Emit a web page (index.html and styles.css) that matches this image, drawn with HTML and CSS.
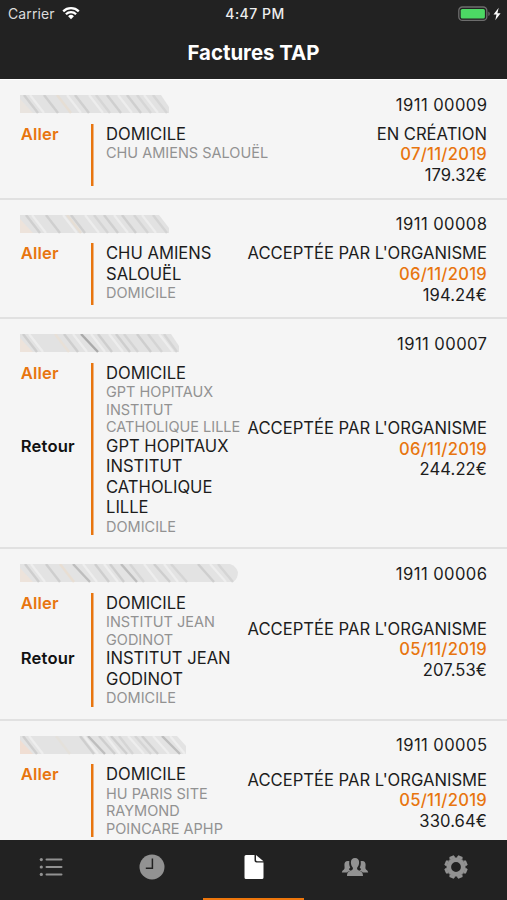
FILE: index.html
```
<!DOCTYPE html>
<html lang="fr">
<head>
	<meta charset="utf-8">
	<title>Factures TAP</title>
	<link rel="stylesheet" href="styles.css">
</head>
<body>
	<header class="header">
		<div class="status">
			<div class="status-left">
				<span class="carrier">Carrier</span>
				<svg class="wifi" width="18" height="14" viewBox="0 0 18 14" fill="none" stroke="#fff" stroke-width="2.3">
					<path d="M1.2 5.3a11.2 11.2 0 0 1 15.6 0"/>
					<path d="M3.9 8.3a7.3 7.3 0 0 1 10.2 0"/>
					<path d="M9 13.2L6.1 10.2a4.2 4.2 0 0 1 5.8 0z" fill="#fff" stroke="none"/>
				</svg>
			</div>
			<span class="time">4:47 PM</span>
			<div class="status-right">
				<svg width="44" height="16" viewBox="0 0 44 16">
					<rect x=".8" y="1" width="28" height="13.4" rx="3.6" fill="none" stroke="#6d6d6d" stroke-width="1.3"/>
					<rect x="2.7" y="3" width="24.2" height="9.5" rx="1.6" fill="#4cd964"/>
					<path d="M30.3 5.4c2 .9 2 3.7 0 4.6z" fill="#6d6d6d"/>
					<path d="M40.7 1.8L35.5 8.6h3l-1.2 5.6 5.3-7h-3.2z" fill="#fff"/>
				</svg>
			</div>
		</div>
		<h1 class="title">Factures TAP</h1>
	</header>

	<main class="list">
		<section class="item">
			<div class="item-head">
				<svg class="name" width="149" height="19" viewBox="0 0 149 19">
					<path d="M0 0H141L149 12V18H0z" fill="#e2e2e2"/>
					<path d="M0 4L13 18H0z" fill="#e9e4df"/>
					<g class="hatch">
						<path d="M4 0l14 18M24 0l14 18M55 0l14 18M87 0l14 18M107 0l14 18" stroke="#c6c6c6"/>
						<path d="M10 0l14 18M47 0l14 18M69 0l14 18M98 0l14 18M124 0l14 18" stroke="#f3f3f3"/>
						<path d="M37 0l14 18" stroke="#e9dccd"/>
						<path d="M76 0l14 18M117 0l14 18M133 0l14 18" stroke="#d0d0d0"/>
					</g>
				</svg>
				<span class="number">1911 00009</span>
			</div>
			<div class="item-body">
				<div class="trips">
					<div class="trip"><span class="way">Aller</span><div class="route"><p class="from">DOMICILE</p><p class="to">CHU AMIENS SALOUËL</p></div></div>
				</div>
				<div class="info"><p>EN CRÉATION</p><p class="date">07/11/2019</p><p class="amount">179.32€</p></div>
			</div>
		</section>

		<section class="item">
			<div class="item-head">
				<svg class="name" width="149" height="19" viewBox="0 0 149 19">
					<path d="M0 0H139L149 13V18H0z" fill="#e2e2e2"/>
					<path d="M0 4L13 18H0z" fill="#ede3db"/>
					<g class="hatch">
						<path d="M6 0l14 18M26 0l14 18M51 0l14 18M84 0l14 18M102 0l14 18" stroke="#c6c6c6"/>
						<path d="M12 0l14 18M43 0l14 18M65 0l14 18M94 0l14 18M122 0l14 18" stroke="#f3f3f3"/>
						<path d="M47 0l14 18" stroke="#e9dccd"/>
						<path d="M74 0l14 18M114 0l14 18M133 0l14 18" stroke="#cecece"/>
					</g>
				</svg>
				<span class="number">1911 00008</span>
			</div>
			<div class="item-body">
				<div class="trips">
					<div class="trip"><span class="way">Aller</span><div class="route"><p class="from">CHU AMIENS SALOUËL</p><p class="to">DOMICILE</p></div></div>
				</div>
				<div class="info"><p>ACCEPTÉE PAR L'ORGANISME</p><p class="date">06/11/2019</p><p class="amount">194.24€</p></div>
			</div>
		</section>

		<section class="item">
			<div class="item-head">
				<svg class="name" width="159" height="19" viewBox="0 0 159 19">
					<path d="M0 0H151L159 12V18H0z" fill="#e2e2e2"/>
					<path d="M0 4L13 18H0z" fill="#ede3db"/>
					<g class="hatch">
						<path d="M61 0l17 18" stroke="#8d8d8d"/>
						<path d="M3 0l14 18M44 0l14 18M78 0l14 18M96 0l14 18M117 0l14 18" stroke="#c4c4c4"/>
						<path d="M9 0l14 18M53 0l14 18M71 0l14 18M89 0l14 18M139 0l14 18" stroke="#f4f4f4"/>
						<path d="M35 0l14 18" stroke="#ecdfd2"/>
						<path d="M104 0l14 18M128 0l14 18M144 0l13 18" stroke="#cecece"/>
					</g>
				</svg>
				<span class="number">1911 00007</span>
			</div>
			<div class="item-body">
				<div class="trips">
					<div class="trip"><span class="way">Aller</span><div class="route"><p class="from">DOMICILE</p><p class="to">GPT HOPITAUX INSTITUT CATHOLIQUE LILLE</p></div></div>
					<div class="trip"><span class="way back">Retour</span><div class="route"><p class="from">GPT HOPITAUX INSTITUT CATHOLIQUE LILLE</p><p class="to">DOMICILE</p></div></div>
				</div>
				<div class="info"><p>ACCEPTÉE PAR L'ORGANISME</p><p class="date">06/11/2019</p><p class="amount">244.22€</p></div>
			</div>
		</section>

		<section class="item">
			<div class="item-head">
				<svg class="name" width="218" height="19" viewBox="0 0 218 19">
					<path d="M0 0H210Q216 2 218 8Q218 15 213 18H0z" fill="#e3e3e3"/>
					<path d="M0 4L13 18H0z" fill="#ede3db"/>
					<g class="hatch">
						<path d="M53 0l17 18M101 0l16 18" stroke="#ababab"/>
						<path d="M5 0l14 18M26 0l14 18M75 0l14 18M90 0l14 18M134 0l16 18M178 0l16 18" stroke="#c4c4c4"/>
						<path d="M11 0l14 18M63 0l14 18M84 0l14 18M124 0l14 18M144 0l14 18M190 0l16 18" stroke="#f4f4f4"/>
						<path d="M40 0l14 18" stroke="#ecdccb"/>
						<path d="M110 0l14 18M151 0l16 18M198 0l15 18" stroke="#cecece"/>
					</g>
				</svg>
				<span class="number">1911 00006</span>
			</div>
			<div class="item-body">
				<div class="trips">
					<div class="trip"><span class="way">Aller</span><div class="route"><p class="from">DOMICILE</p><p class="to">INSTITUT JEAN GODINOT</p></div></div>
					<div class="trip"><span class="way back">Retour</span><div class="route"><p class="from">INSTITUT JEAN GODINOT</p><p class="to">DOMICILE</p></div></div>
				</div>
				<div class="info"><p>ACCEPTÉE PAR L'ORGANISME</p><p class="date">05/11/2019</p><p class="amount">207.53€</p></div>
			</div>
		</section>

		<section class="item">
			<div class="item-head">
				<svg class="name" width="166" height="19" viewBox="0 0 166 19">
					<path d="M0 0H157L166 10V18H0z" fill="#e3e3e3"/>
					<path d="M0 4L13 18H0z" fill="#f0ded3"/>
					<g class="hatch">
						<path d="M68 0l17 18M142 0l18 18" stroke="#ababab"/>
						<path d="M3 0l14 18M60 0l14 18M79 0l16 18M91 0l16 18M122 0l16 18" stroke="#c4c4c4"/>
						<path d="M9 0l14 18M64 0l14 18M86 0l14 18M108 0l16 18M133 0l16 18M150 0l15 18" stroke="#f4f4f4"/>
						<path d="M36 0l14 18" stroke="#e6e0d8"/>
						<path d="M99 0l14 18M115 0l16 18" stroke="#cecece"/>
					</g>
				</svg>
				<span class="number">1911 00005</span>
			</div>
			<div class="item-body">
				<div class="trips">
					<div class="trip"><span class="way">Aller</span><div class="route"><p class="from">DOMICILE</p><p class="to">HU PARIS SITE RAYMOND POINCARE APHP</p></div></div>
				</div>
				<div class="info"><p>ACCEPTÉE PAR L'ORGANISME</p><p class="date">05/11/2019</p><p class="amount">330.64€</p></div>
			</div>
		</section>
	</main>

	<nav class="tabs">
		<a class="tab">
			<svg width="28" height="28" viewBox="0 0 28 28" fill="#929292">
				<circle cx="4.3" cy="6.6" r="1.6"/><circle cx="4.3" cy="14" r="1.6"/><circle cx="4.3" cy="21.4" r="1.6"/>
				<path d="M9.5 6.6h15M9.5 14h15M9.5 21.4h15" stroke="#929292" stroke-width="2" stroke-linecap="round"/>
			</svg>
		</a>
		<a class="tab">
			<svg width="28" height="28" viewBox="0 0 28 28">
				<circle cx="14" cy="14" r="12.5" fill="#929292"/>
				<path d="M14.4 5.5v9.8H7.8" fill="none" stroke="#222" stroke-width="1.5"/>
			</svg>
		</a>
		<a class="tab active">
			<svg width="28" height="28" viewBox="0 0 28 28" fill="#fff">
				<path d="M6 2h8.5v5.5q0 2 2 2h7V24.5q0 1.5-1.5 1.5H6q-1.5 0-1.5-1.5V3.5Q4.5 2 6 2z"/>
				<path d="M16 2l7.5 6.2h-6q-1.5 0-1.5-1.5z"/>
			</svg>
		</a>
		<a class="tab">
			<svg width="28" height="28" viewBox="0 0 28 28" fill="#929292">
				<path d="M14 5.1c2.7 0 4.1 1.7 4.1 4.3 0 2.4-.9 3.8-1.8 5-.7 1 .1 2.5 1.6 3.2 2.3 1 4.1 1.7 4.1 5.4H6c0-3.7 1.8-4.4 4.1-5.4 1.5-.7 2.3-2.2 1.6-3.2-.9-1.2-1.8-2.6-1.8-5 0-2.6 1.4-4.3 4.1-4.3z"/>
				<path d="M8.4 8.2c-3.4-.8-5 .8-5 3.6 0 2 .5 3.2-.1 4.2-.5 1-2.3 1.3-2.5 3.5h5.5c.7-1 1.9-1.3 3.3-2-.8-.4-1.5-.7-1.6-1.6l1.3-1.3c-1-1.8-1.4-4.2-.9-6.4z"/>
				<path d="M19.6 8.2c3.4-.8 5 .8 5 3.6 0 2-.5 3.2.1 4.2.5 1 2.3 1.3 2.5 3.5h-5.5c-.7-1-1.9-1.3-3.3-2 .8-.4 1.5-.7 1.6-1.6l-1.3-1.3c1-1.8 1.4-4.2.9-6.4z"/>
			</svg>
		</a>
		<a class="tab">
			<svg width="28" height="28" viewBox="0 0 28 28">
				<g transform="translate(14 14)" fill="#929292">
					<circle r="7.2" fill="none" stroke="#929292" stroke-width="4.6"/>
					<g id="teeth">
						<path d="M-3.2-9L-2.3-11.7H2.3L3.2-9z" transform="rotate(22.5)"/>
						<path d="M-3.2-9L-2.3-11.7H2.3L3.2-9z" transform="rotate(67.5)"/>
						<path d="M-3.2-9L-2.3-11.7H2.3L3.2-9z" transform="rotate(112.5)"/>
						<path d="M-3.2-9L-2.3-11.7H2.3L3.2-9z" transform="rotate(157.5)"/>
					</g>
					<use href="#teeth" transform="rotate(180)"/>
				</g>
			</svg>
		</a>
	</nav>
</body>
</html>
```
FILE: styles.css
```
* {
	box-sizing: border-box;
}

body {
	margin: 0;
	height: 900px;
	display: flex;
	flex-direction: column;
	overflow: hidden;
	font-family: Inter, Roboto, sans-serif;
	font-size: 16.6px;
	line-height: 20.5px;
	color: #1c1c1c;
	background-color: #f5f5f5;
}

p, h1 {
	margin: 0;
}

.header {
	height: 79px;
	flex: none;
	background-color: #222;
	color: #fff;
}

.status {
	display: grid;
	grid-template-columns: 1fr auto 1fr;
	align-items: center;
	height: 27px;
	padding: 0 5px 0 8px;
	font-size: 14px;
}

.status-left {
	display: flex;
	align-items: center;
	gap: 7px;
}

.carrier {
	padding-top: 1px;
	color: #dcdcdc;
	letter-spacing: 0.1px;
}

.wifi {
	margin-bottom: 1px;
}

.time {
	padding-top: 1px;
	font-weight: 500;
	font-size: 14px;
	letter-spacing: 0.5px;
	color: #eee;
}

.status-right {
	display: flex;
	justify-content: flex-end;
}

.title {
	padding-top: 13px;
	font-size: 20.4px;
	line-height: 25px;
	font-weight: 700;
	text-align: center;
}

.list {
	flex: 1;
	min-height: 0;
	overflow: hidden;
	border-top: 1px solid #fff;
}

.item {
	padding: 14.8px 20px 11.9px;
	border-bottom: 2px solid #e1e1e1;
}

.item-head {
	display: flex;
	justify-content: space-between;
	height: 28.8px;
}

.name {
	margin-top: 0.5px;
}

.hatch {
	stroke-width: 2.4px;
	opacity: 0.65;
}

.number {
	letter-spacing: 0.42px;
	margin-right: -0.42px;
}

.item-body {
	display: flex;
	align-items: center;
	justify-content: space-between;
}

.trips {
	flex: 1;
	align-self: stretch;
	min-height: 62px;
	background: linear-gradient(#e8750f, #e8750f) 71px 0 / 2.5px 100% no-repeat;
}

.trip {
	display: flex;
}

.way {
	width: 86px;
	flex: none;
	padding-left: 0.7px;
	font-weight: 600;
	letter-spacing: 0.2px;
	color: #e8750f;
}

.back {
	color: #111;
}

.to {
	font-size: 14.5px;
	line-height: 17.5px;
	color: #929292;
}

.info {
	flex: none;
	line-height: 20.7px;
	text-align: right;
}

.date {
	font-weight: 500;
	letter-spacing: 0.25px;
	color: #e8750f;
}

.amount {
	letter-spacing: 0.1px;
}

.tabs {
	display: flex;
	flex: none;
	height: 60px;
	background-color: #222;
}

.tab {
	flex: 1;
	display: flex;
	justify-content: center;
	padding-top: 13px;
}

.active {
	border-bottom: 2px solid #ee760c;
}
```
